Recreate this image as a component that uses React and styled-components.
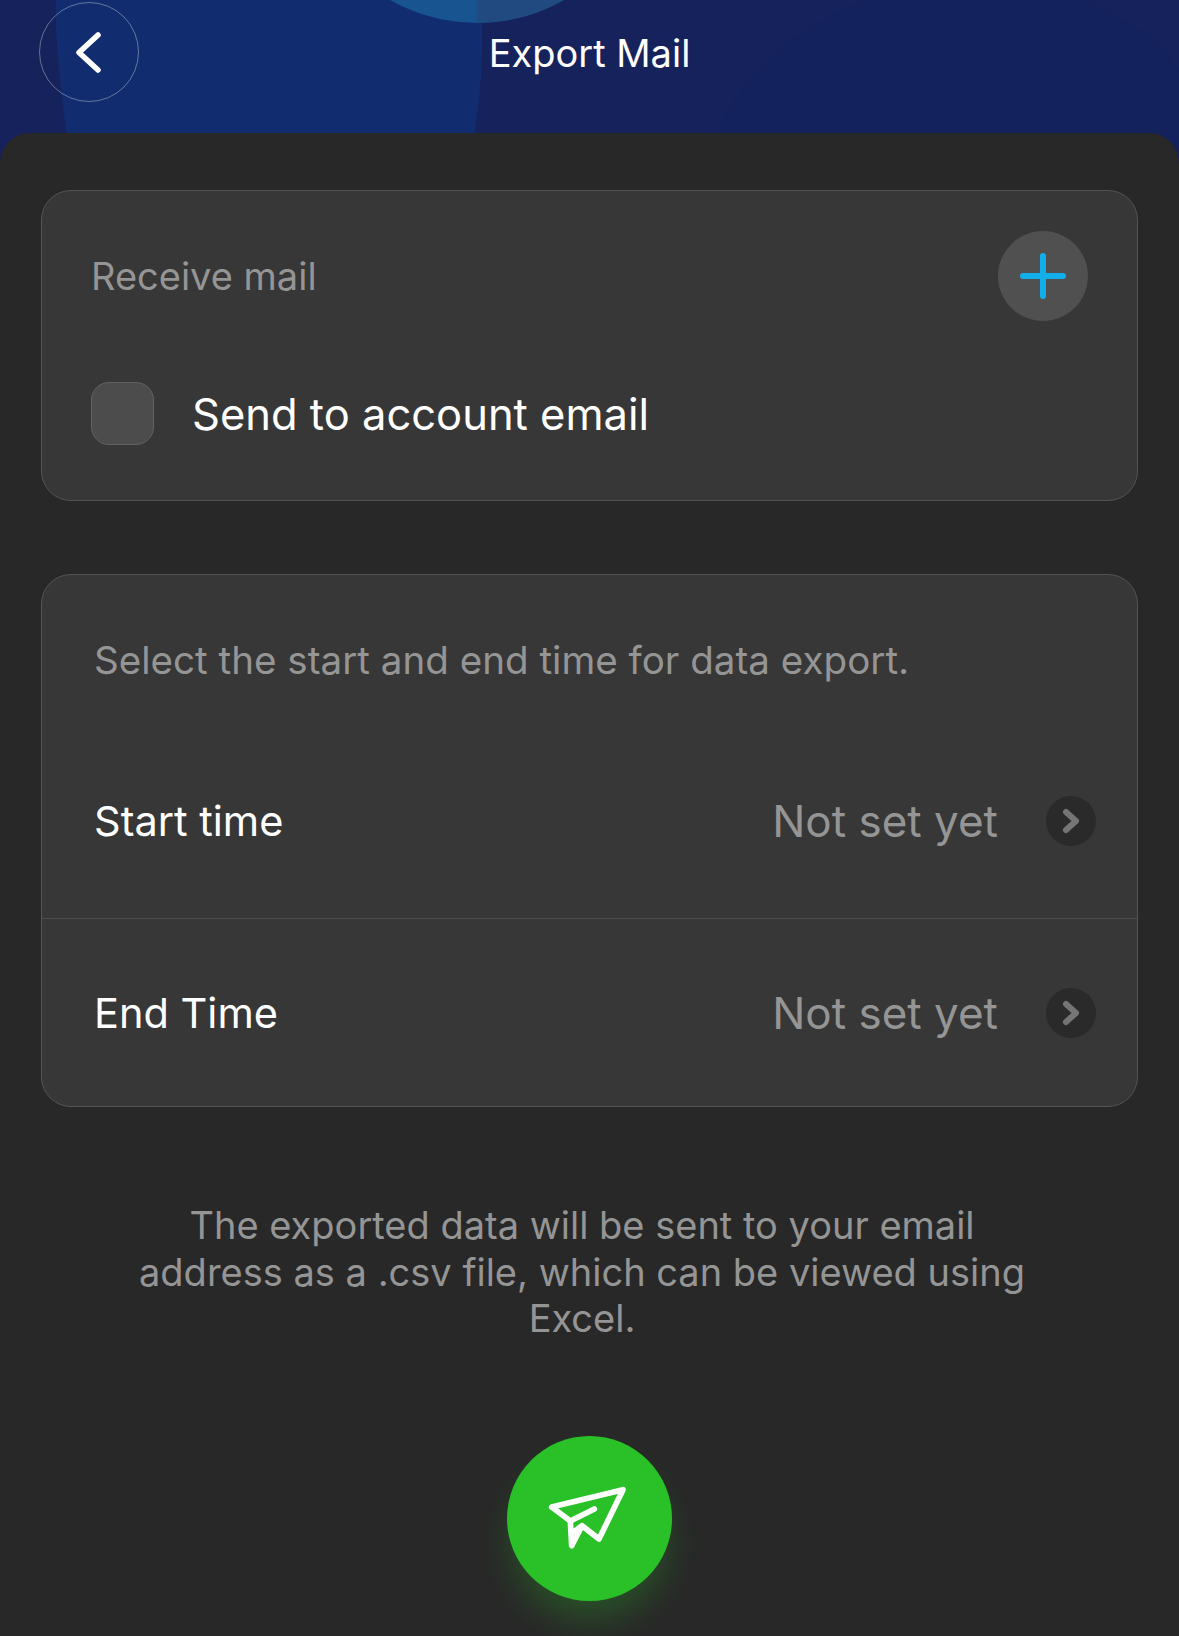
import React from 'react'
import styled, { createGlobalStyle } from 'styled-components'

const GlobalStyle = createGlobalStyle`
  html, body {
    margin: 0;
    padding: 0;
    background: #282828;
  }
  * {
    box-sizing: border-box;
  }
`

const Page = styled.div`
  position: relative;
  width: 1179px;
  height: 1636px;
  overflow: hidden;
  background: #16225b;
  font-family: Inter, "Liberation Sans", sans-serif;
`

const HeaderArt = styled.svg`
  position: absolute;
  top: 0;
  left: 0;
  width: 1179px;
  height: 170px;
`

const Header = styled.header`
  position: relative;
  height: 133px;
  padding: 2px 39px 0;
`

const BackButton = styled.div`
  width: 100px;
  height: 100px;
  border: 1px solid rgba(255, 255, 255, 0.35);
  border-radius: 50%;
  display: flex;
  align-items: center;
  justify-content: center;
  padding-right: 3px;
`

const Title = styled.div`
  position: absolute;
  top: 29px;
  left: 0;
  right: 0;
  text-align: center;
  color: #fff;
  font-size: 38px;
  line-height: 48px;
`

const Sheet = styled.main`
  position: relative;
  height: 1503px;
  padding: 57px 41px 0;
  background: #282828;
  border-radius: 30px 30px 0 0;
  display: flex;
  flex-direction: column;
`

const Card = styled.section`
  width: 1097px;
  background: #373737;
  border: 1px solid #545454;
  border-radius: 30px;
`

const ReceiveCard = styled(Card)`
  height: 311px;
  padding: 40px 49px 0 49px;
`

const TimeCard = styled(Card)`
  height: 533px;
  margin-top: 73px;
`

const ReceiveHead = styled.div`
  height: 90px;
  display: flex;
  align-items: center;
  justify-content: space-between;
`

const Muted = styled.div`
  color: #959595;
  font-size: 38px;
`

const AddButton = styled.div`
  width: 90px;
  height: 90px;
  border-radius: 50%;
  background: #505050;
  display: flex;
  align-items: center;
  justify-content: center;
`

const CheckRow = styled.div`
  margin-top: 61px;
  display: flex;
  align-items: center;
  gap: 38px;
`

const Checkbox = styled.div`
  width: 63px;
  height: 63px;
  border: 1px solid #626262;
  border-radius: 18px;
  background: #4c4c4c;
`

const CheckLabel = styled.div`
  color: #fff;
  font-size: 43.5px;
`

const Hint = styled(Muted)`
  height: 149px;
  padding: 63px 0 0 52px;
  font-size: 38.6px;
  line-height: 44px;
`

const TimeRow = styled.div`
  height: ${p => p.$height}px;
  padding: 0 41px 0 52px;
  display: flex;
  align-items: center;
  border-bottom: ${p => (p.$divider ? '1px solid #4d4d4d' : 'none')};
`

const RowLabel = styled.div`
  flex: 1;
  color: #fff;
  font-size: 41.5px;
`

const RowValue = styled.div`
  color: #959595;
  font-size: 44px;
  margin-right: 48px;
`

const Arrow = styled.div`
  width: 50px;
  height: 50px;
  border-radius: 50%;
  background: #2a2a2a;
  display: flex;
  align-items: center;
  justify-content: center;
`

const Note = styled.p`
  width: 900px;
  margin: 95px 0 0 91px;
  text-align: center;
  color: #959595;
  font-size: 38px;
  line-height: 46.5px;
`

const SendButton = styled.div`
  width: 165px;
  height: 165px;
  margin: 94px 0 0 466px;
  padding-right: 5px;
  border-radius: 50%;
  background: #2ac128;
  box-shadow: 0 24px 36px -6px rgba(42, 193, 40, 0.28);
  display: flex;
  align-items: center;
  justify-content: center;
`

const TimeItem = ({ label, height, divider }) => (
  <TimeRow $height={height} $divider={divider}>
    <RowLabel>{label}</RowLabel>
    <RowValue>Not set yet</RowValue>
    <Arrow>
      <svg width="20" height="26" viewBox="0 0 20 26" fill="none">
        <path d="M5 4l10 9-10 9" stroke="#757575" strokeWidth="6" strokeLinecap="round" strokeLinejoin="round" />
      </svg>
    </Arrow>
  </TimeRow>
)

export default function App() {
  return (
    <Page>
      <GlobalStyle />
      <HeaderArt viewBox="0 0 1179 170">
        <path d="M700 170C730 80 790 30 865 0H1085C1130 20 1160 40 1179 70V170Z" fill="#13215c" />
        <path d="M56 0H481C484 50 482 100 468 170H70C64 100 54 50 56 0Z" fill="#112d70" />
        <circle cx="477" cy="-153" r="176" fill="#175490" />
        <path d="M477 0V23A176 176 0 0 0 564 0Z" fill="#204a80" />
      </HeaderArt>
      <Header>
        <BackButton>
          <svg width="30" height="44" viewBox="0 0 30 44" fill="none">
            <path d="M25 5L6 22.5 25 40" stroke="#fff" strokeWidth="5.5" strokeLinecap="round" strokeLinejoin="round" />
          </svg>
        </BackButton>
        <Title>Export Mail</Title>
      </Header>
      <Sheet>
        <ReceiveCard>
          <ReceiveHead>
            <Muted>Receive mail</Muted>
            <AddButton>
              <svg width="46" height="46" viewBox="0 0 46 46" fill="none">
                <path d="M23 3v40M3 23h40" stroke="#12aeea" strokeWidth="6" strokeLinecap="round" />
              </svg>
            </AddButton>
          </ReceiveHead>
          <CheckRow>
            <Checkbox />
            <CheckLabel>Send to account email</CheckLabel>
          </CheckRow>
        </ReceiveCard>
        <TimeCard>
          <Hint>Select the start and end time for data export.</Hint>
          <TimeItem label="Start time" height={195} divider />
          <TimeItem label="End Time" height={187} />
        </TimeCard>
        <Note>The exported data will be sent to your email address as a .csv file, which can be viewed using Excel.</Note>
        <SendButton>
          <svg width="80" height="66" viewBox="200 230 240 198" fill="none">
            <path
              d="M214 296L428 244L356 392L305 352L274 412L270 338L214 296ZM270 338L342 302M305 352L284 368"
              stroke="#fff"
              strokeWidth="17"
              strokeLinecap="round"
              strokeLinejoin="round"
            />
          </svg>
        </SendButton>
      </Sheet>
    </Page>
  )
}
